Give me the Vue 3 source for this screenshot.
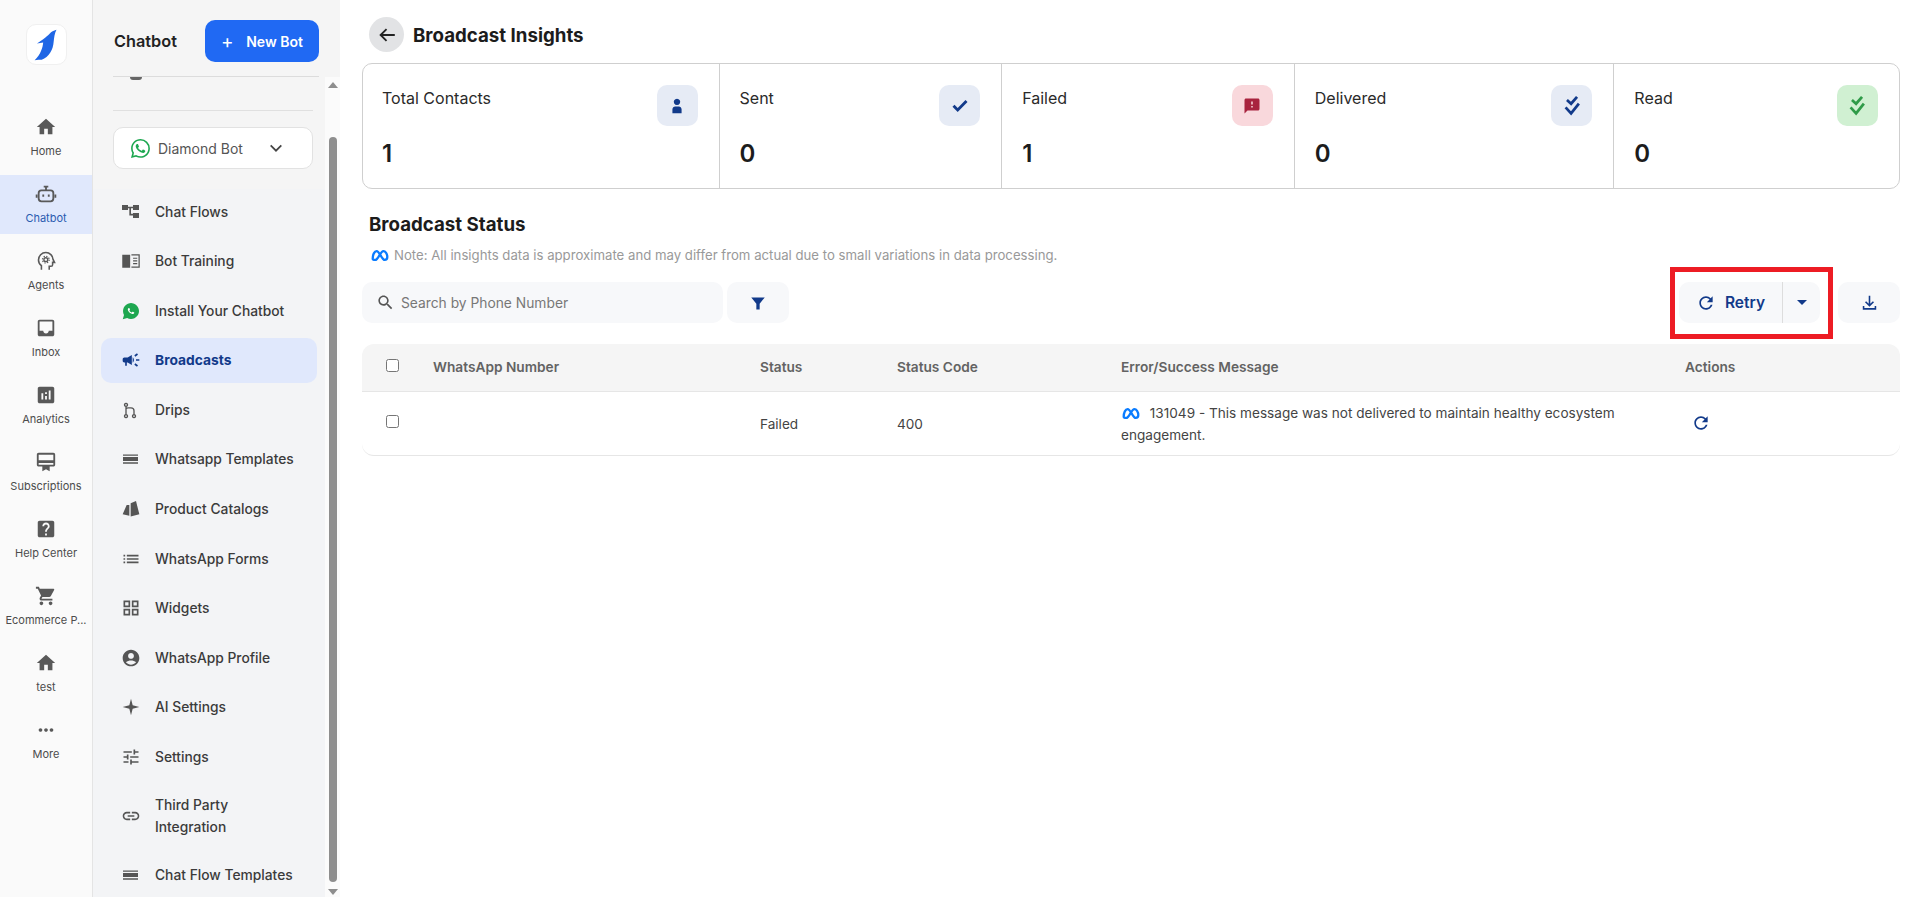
<template>
  <div class="page">
    <!-- left rail -->
    <nav class="rail">
      <div class="logo">
        <svg viewBox="0 0 41 41" width="39" height="39"><path d="M31 5C28 6 25.500 7 24 9C22 11 20 13 17 15L10.500 19.500L17 18.500C16.500 24 14.500 31 8 37L12 36.500L15.500 36.500C23 34 27.500 26 28 18C28.500 13 29 9 31 5z" fill="#1f66e5" /></svg>
      </div>
      <div v-for="item in railItems" :key="item.label" class="rail-item" :class="{ active: item.active }">
        <svg viewBox="0 0 24 24" width="22" height="22">
          <path v-if="item.d" :d="item.d" />
          <g v-else-if="item.label === 'Chatbot'" class="line-icon">
            <rect x="4" y="8" width="16" height="12" rx="3" />
            <path d="M12 8V4.500M9.500 4h5M1.800 12.500v3.500M22.200 12.500v3.500" />
            <path d="M9 12.500v2.500M15 12.500v2.500" />
          </g>
          <g v-else class="line-icon head-icon">
            <path d="M7 21.500v-4.500c-1.900-1.500-3.200-3.700-3.200-6.200C3.800 6.300 7.400 2.800 11.800 2.800c4.300 0 7.800 3.300 7.900 7.500l1.600 3.200h-2.100v2.500c0 1-.8 1.800-1.800 1.800h-1.900v3.700" />
            <circle cx="11.800" cy="10.500" r="2.100" class="gear-ring" />
            <circle cx="11.800" cy="10.500" r="3.700" class="gear-teeth" />
          </g>
        </svg>
        <span>{{ item.label }}</span>
      </div>
    </nav>

    <!-- chatbot sidebar -->
    <aside class="sidebar">
      <div class="side-head">
        <span class="side-title">Chatbot</span>
        <button class="new-bot"><span class="plus">+</span> New Bot</button>
      </div>
      <div class="side-body">
        <div class="side-scroll">
          <div class="side-top">
            <div class="clipped-avatar"></div>
            <div class="bot-select">
              <svg viewBox="0 0 16 16" width="19" height="19" class="wa-outline"><path :d="icons.waOutline" /></svg>
              <span>Diamond Bot</span>
              <svg viewBox="0 0 24 24" width="16" height="16" class="chev"><path d="M4 8l8 8 8-8" /></svg>
            </div>
          </div>
          <div class="menu">
            <div v-for="m in menuItems" :key="m.label" class="menu-item" :class="{ active: m.active }">
              <svg viewBox="0 0 24 24" width="20" height="20" class="menu-icon" :class="m.cls">
                <path v-if="m.d" :d="m.d" />
                <g v-if="m.label === 'Install Your Chatbot'" transform="translate(1.600 1.600) scale(.87)">
                  <path d="M.6 23.400l1.700-6.100A11 11 0 1 1 6.700 21.700z" />
                  <path transform="translate(3.200 3.200) scale(1.100)" fill="#fff" :d="icons.waPhone" />
                </g>
              </svg>
              <span class="menu-label">{{ m.label }}</span>
            </div>
          </div>
        </div>
        <div class="scrollbar">
          <i class="arrow up"></i>
          <div class="thumb"></div>
          <i class="arrow down"></i>
        </div>
      </div>
    </aside>

    <!-- main -->
    <main class="main">
      <div class="title-row">
        <button class="back">
          <svg viewBox="0 0 24 24" width="22" height="22"><path d="M20.500 12H5M11.500 5.500L5 12l6.500 6.500" /></svg>
        </button>
        <h1>Broadcast Insights</h1>
      </div>

      <section class="stats">
        <div v-for="s in stats" :key="s.label" class="stat">
          <div class="stat-text">
            <div class="stat-label">{{ s.label }}</div>
            <div class="stat-value">{{ s.value }}</div>
          </div>
          <div class="stat-icon" :class="s.tone">
            <svg viewBox="0 0 24 24" :width="s.size || 22" :height="s.size || 22">
              <path v-if="s.d" :d="s.d" />
              <g v-else class="double-check">
                <path d="M6.500 5.500l4.500 4 6.500-7.500" />
                <path d="M5 13.500l6 6.500 8.500-10.500" />
              </g>
            </svg>
          </div>
        </div>
      </section>

      <h2>Broadcast Status</h2>
      <p class="note">
        <svg viewBox="0 0 24 16" width="20" height="13" class="meta"><path d="M3 12c0-5 2.200-9.500 4.800-9.500 3.800 0 6.400 11 10 11 2 0 3.200-1.400 3.200-3.600 0-4-2.400-7.400-4.800-7.400-3.800 0-6.400 11-10 11C4.200 13.500 3 13 3 12z" /></svg>
        Note: All insights data is approximate and may differ from actual due to small variations in data processing.
      </p>

      <div class="toolbar">
        <div class="search">
          <svg viewBox="0 0 24 24" width="19" height="19"><path :d="icons.search" /></svg>
          <span>Search by Phone Number</span>
        </div>
        <button class="tool-btn">
          <svg viewBox="0 0 24 24" width="18" height="18"><path d="M3 4.500h18l-6.800 8.500v7.500h-4.400V13z" /></svg>
        </button>
        <div class="spacer"></div>
        <div class="retry">
          <button class="retry-main">
            <svg viewBox="0 0 24 24" width="20" height="20"><path :d="icons.refresh" /></svg>
            Retry
          </button>
          <button class="retry-drop"><i class="caret"></i></button>
          <div class="highlight"></div>
        </div>
        <button class="tool-btn download">
          <svg viewBox="0 0 24 24" width="19" height="19" class="stroke-icon"><path d="M12 3.500v12M7 11l5 5 5-5M4.500 16.500v3.500h15v-3.500" /></svg>
        </button>
      </div>

      <section class="table">
        <div class="tr head">
          <div><input type="checkbox" /></div>
          <div>WhatsApp Number</div>
          <div>Status</div>
          <div>Status Code</div>
          <div>Error/Success Message</div>
          <div>Actions</div>
        </div>
        <div class="tr row">
          <div><input type="checkbox" /></div>
          <div></div>
          <div>Failed</div>
          <div>400</div>
          <div class="msg">
            <svg viewBox="0 0 24 16" width="20" height="13" class="meta"><path d="M3 12c0-5 2.200-9.500 4.800-9.500 3.800 0 6.400 11 10 11 2 0 3.200-1.400 3.200-3.600 0-4-2.400-7.400-4.800-7.400-3.800 0-6.400 11-10 11C4.200 13.500 3 13 3 12z" /></svg>
            131049 - This message was not delivered to maintain healthy ecosystem engagement.
          </div>
          <div class="act">
            <svg viewBox="0 0 24 24" width="20" height="20"><path :d="icons.refresh" /></svg>
          </div>
        </div>
      </section>
    </main>
  </div>
</template>

<script setup>
const icons = {
  home: 'M10 20v-6h4v6h5v-8h3L12 3 2 12h3v8z',
  refresh: 'M17.650 6.350C16.200 4.900 14.210 4 12 4c-4.420 0-7.990 3.580-7.990 8s3.570 8 7.990 8c3.730 0 6.840-2.550 7.730-6h-2.080c-.820 2.330-3.040 4-5.650 4-3.310 0-6-2.690-6-6s2.690-6 6-6c1.660 0 3.140.690 4.220 1.780L13 11h7V4l-2.350 2.350z',
  search: 'M15.500 14h-.790l-.280-.270C15.410 12.590 16 11.110 16 9.500 16 5.910 13.090 3 9.500 3S3 5.910 3 9.500 5.910 16 9.500 16c1.610 0 3.090-.590 4.230-1.570l.270.280v.790l5 4.990L20.490 19l-4.990-5zm-6 0C7.010 14 5 11.990 5 9.500S7.010 5 9.500 5 14 7.010 14 9.500 11.990 14 9.500 14z',
  waOutline: 'M13.601 2.326A7.854 7.854 0 0 0 7.994 0C3.627 0 .068 3.558.064 7.926c0 1.399.366 2.760 1.057 3.965L0 16l4.204-1.102a7.933 7.933 0 0 0 3.790.965h.004c4.368 0 7.926-3.558 7.930-7.930A7.898 7.898 0 0 0 13.600 2.326zM7.994 14.521a6.573 6.573 0 0 1-3.356-.920l-.240-.144-2.494.654.666-2.433-.156-.251a6.560 6.560 0 0 1-1.007-3.505c0-3.626 2.957-6.584 6.591-6.584a6.560 6.560 0 0 1 4.660 1.931 6.557 6.557 0 0 1 1.928 4.660c-.004 3.639-2.961 6.592-6.592 6.592zm3.615-4.934c-.197-.099-1.170-.578-1.353-.646-.182-.065-.315-.099-.445.099-.133.197-.513.646-.627.775-.114.133-.232.148-.430.050-.197-.100-.836-.308-1.592-.985-.590-.525-.985-1.175-1.103-1.372-.114-.198-.011-.304.088-.403.087-.088.197-.232.296-.346.100-.114.133-.198.198-.330.065-.134.034-.248-.015-.347-.050-.099-.445-1.076-.612-1.470-.160-.389-.323-.335-.445-.340-.114-.007-.247-.007-.380-.007a.729.729 0 0 0-.529.247c-.182.198-.691.677-.691 1.654 0 .977.710 1.916.810 2.049.098.133 1.394 2.132 3.383 2.992.470.205.840.326 1.129.418.475.152.904.129 1.246.080.380-.058 1.171-.480 1.338-.943.164-.464.164-.860.114-.943-.049-.084-.182-.133-.380-.232z',
  waPhone: 'M11.609 9.587c-.197-.099-1.170-.578-1.353-.646-.182-.065-.315-.099-.445.099-.133.197-.513.646-.627.775-.114.133-.232.148-.430.050-.197-.100-.836-.308-1.592-.985-.590-.525-.985-1.175-1.103-1.372-.114-.198-.011-.304.088-.403.087-.088.197-.232.296-.346.100-.114.133-.198.198-.330.065-.134.034-.248-.015-.347-.050-.099-.445-1.076-.612-1.470-.160-.389-.323-.335-.445-.340-.114-.007-.247-.007-.380-.007a.729.729 0 0 0-.529.247c-.182.198-.691.677-.691 1.654 0 .977.710 1.916.810 2.049.098.133 1.394 2.132 3.383 2.992.470.205.840.326 1.129.418.475.152.904.129 1.246.080.380-.058 1.171-.480 1.338-.943.164-.464.164-.860.114-.943-.049-.084-.182-.133-.380-.232z',
  bars: 'M2.400 6.600h18V8h-18zM2.400 9.500h18v5h-18zM2.400 16h18v1.600h-18z'
}

const railItems = [
  { label: 'Home', d: icons.home },
  { label: 'Chatbot', active: true },
  { label: 'Agents' },
  { label: 'Inbox', d: 'M19 3H4.990c-1.110 0-1.980.890-1.980 2L3 19c0 1.100.880 2 1.990 2H19c1.100 0 2-.900 2-2V5c0-1.110-.900-2-2-2zm0 12h-4c0 1.660-1.350 3-3 3s-3-1.340-3-3H4.990V5H19v10z' },
  { label: 'Analytics', d: 'M19 3H5c-1.100 0-2 .900-2 2v14c0 1.100.900 2 2 2h14c1.100 0 2-.900 2-2V5c0-1.100-.900-2-2-2zM9 17H7v-7h2v7zm4 0h-2v-4h2v4zm0-6h-2V9h2v2zm4 6h-2V7h2v10z' },
  { label: 'Subscriptions', d: 'M20 2H4c-1.110 0-2 .890-2 2v11c0 1.110.890 2 2 2h4v5l4-2 4 2v-5h4c1.110 0 2-.890 2-2V4c0-1.110-.890-2-2-2zm0 13H4v-2h16v2zm0-5H4V4h16v6z' },
  { label: 'Help Center', d: 'M19 3H5c-1.110 0-2 .900-2 2v14c0 1.100.890 2 2 2h14c1.100 0 2-.900 2-2V5c0-1.100-.900-2-2-2zm-6 16h-2v-2h2v2zm2.070-7.750l-.900.920C13.450 12.900 13 13.500 13 15h-2v-.500c0-1.100.450-2.100 1.170-2.830l1.240-1.260c.370-.360.590-.860.590-1.410 0-1.100-.900-2-2-2s-2 .900-2 2H8c0-2.210 1.790-4 4-4s4 1.790 4 4c0 .880-.360 1.680-.930 2.250z' },
  { label: 'Ecommerce P...', d: 'M7 18c-1.100 0-1.990.900-1.990 2S5.900 22 7 22s2-.900 2-2-.900-2-2-2zM1 2v2h2l3.600 7.590-1.350 2.450c-.160.280-.250.610-.250.960 0 1.100.900 2 2 2h12v-2H7.420c-.140 0-.250-.110-.250-.250l.030-.120.900-1.630h7.450c.750 0 1.410-.410 1.750-1.030l3.580-6.490c.080-.140.120-.310.120-.480 0-.550-.450-1-1-1H5.210l-.940-2H1zm16 16c-1.100 0-1.990.900-1.990 2s.890 2 1.990 2 2-.900 2-2-.900-2-2-2z' },
  { label: 'test', d: icons.home },
  { label: 'More', d: 'M6 10c-1.100 0-2 .900-2 2s.900 2 2 2 2-.900 2-2-.900-2-2-2zm12 0c-1.100 0-2 .900-2 2s.900 2 2 2 2-.900 2-2-.900-2-2-2zm-6 0c-1.100 0-2 .900-2 2s.900 2 2 2 2-.900 2-2-.900-2-2-2z' }
]

const menuItems = [
  { label: 'Chat Flows', d: 'M1.200 3.600h7.200v2h6v-2h7.200v6h-7.200v-2H12v6.600h2.400v-1h7.200v6h-7.200v-3H10V7.600H8.400v2H1.200z' },
  { label: 'Bot Training', d: 'M1.500 4.500H11v15.500H1.500zM12.500 4H22.500v16H12.500v-1.500h8.500V5.500h-8.500zM14.500 8h5v1.300h-5zM14.500 11.200h5v1.300h-5zM14.500 14.500h5v1.300h-5z' },
  { label: 'Install Your Chatbot', cls: 'green' },
  { label: 'Broadcasts', active: true, d: 'M18 11v2h4v-2h-4zm-2 6.610c.960.710 2.210 1.650 3.200 2.390.400-.530.800-1.070 1.200-1.600-.990-.740-2.240-1.680-3.200-2.400-.400.540-.800 1.080-1.200 1.610zM20.400 5.600c-.400-.530-.800-1.070-1.200-1.600-.990.740-2.240 1.680-3.200 2.400.400.530.800 1.070 1.200 1.600.960-.720 2.210-1.650 3.200-2.400zM4 9c-1.100 0-2 .900-2 2v2c0 1.100.900 2 2 2h1v4h2v-4h1l5 3V6L8 9H4zm11.500 3c0-1.330-.580-2.530-1.500-3.350v6.690c.920-.810 1.500-2.010 1.500-3.340z' },
  { label: 'Drips', cls: 'route', d: 'M6 7.500v10M6 11c0-1 1-1.500 2.500-1.500h3.500c2 0 3.600 1.500 3.600 3.500v4.300M6 4a1.800 1.800 0 1 0 .01 0zM6 17.500a1.800 1.800 0 1 0 .01 0zM15.600 17.500a1.800 1.800 0 1 0 .01 0z' },
  { label: 'Whatsapp Templates', d: icons.bars },
  { label: 'Product Catalogs', d: 'M11.600 5.200L18 2.400 22 18.400 11.600 21zM2 18.400L6.800 7.200H10V20z' },
  { label: 'WhatsApp Forms', d: 'M3 13h2v-2H3v2zm0 4h2v-2H3v2zm0-8h2V7H3v2zm4 4h14v-2H7v2zm0 4h14v-2H7v2zM7 7v2h14V7H7z' },
  { label: 'Widgets', d: 'M3 3v8h8V3H3zm6 6H5V5h4v4zm-6 4v8h8v-8H3zm6 6H5v-4h4v4zm4-16v8h8V3h-8zm6 6h-4V5h4v4zm-6 4v8h8v-8h-8zm6 6h-4v-4h4v4z' },
  { label: 'WhatsApp Profile', d: 'M12 2C6.480 2 2 6.480 2 12s4.480 10 10 10 10-4.480 10-10S17.520 2 12 2zm0 4c1.930 0 3.500 1.570 3.500 3.500S13.930 13 12 13s-3.500-1.570-3.500-3.500S10.070 6 12 6zm0 14c-2.030 0-4.430-.820-6.140-2.880C7.550 15.800 9.680 15 12 15s4.450.800 6.140 2.120C16.430 19.180 14.030 20 12 20z' },
  { label: 'AI Settings', d: 'M12 2l2 8 8 2-8 2-2 8-2-8-8-2 8-2z' },
  { label: 'Settings', d: 'M3 17v2h6v-2H3zM3 5v2h10V5H3zm10 16v-2h8v-2h-8v-2h-2v6h2zM7 9v2H3v2h4v2h2V9H7zm14 4v-2H11v2h10zm-6-4h2V7h4V5h-4V3h-2v6z' },
  { label: 'Third Party Integration', d: 'M3.900 12c0-1.710 1.390-3.100 3.100-3.100h4V7H7c-2.760 0-5 2.240-5 5s2.240 5 5 5h4v-1.900H7c-1.710 0-3.100-1.390-3.100-3.100zM8 13h8v-2H8v2zm9-6h-4v1.900h4c1.710 0 3.100 1.390 3.100 3.100s-1.390 3.100-3.100 3.100h-4V17h4c2.760 0 5-2.240 5-5s-2.240-5-5-5z' },
  { label: 'Chat Flow Templates', d: icons.bars }
]

const stats = [
  { label: 'Total Contacts', value: 1, tone: 'blue', d: 'M12 4a3.500 3.500 0 1 1-.01 0zM7 15.500c0-1.500 1.500-3 3-3h4c1.500 0 3 1.500 3 3V20H7z' },
  { label: 'Sent', value: 0, tone: 'blue', d: 'M9.500 18.500L3.800 12.800l2.200-2.200 3.500 3.500L18 5.500l2.200 2.200z' },
  { label: 'Failed', value: 1, tone: 'red', size: 18, d: 'M20 2H4c-1.100 0-1.990.900-1.990 2L2 22l4-4h14c1.100 0 2-.900 2-2V4c0-1.100-.900-2-2-2zm-7 12h-2v-2h2v2zm0-4h-2V6h2v4z' },
  { label: 'Delivered', value: 0, tone: 'blue' },
  { label: 'Read', value: 0, tone: 'green' }
]
</script>

<style>
html, body {
  margin: 0;
  background: #fff;
}
</style>

<style scoped>
.page {
  display: flex;
  height: 897px;
  overflow: hidden;
  font-family: Inter, "Noto Sans", sans-serif;
  color: #1c1c1c;
}

/* rail */
.rail {
  width: 92px;
  flex: none;
  background: #fafafa;
  border-right: 1px solid #e4e4e4;
}
.logo {
  width: 41px;
  height: 41px;
  margin: 24px 0 43px 26px;
  background: #fff;
  border: 1px solid #f0f0f0;
  border-radius: 10px;
  box-sizing: border-box;
}
.rail-item {
  height: 59px;
  margin-bottom: 8px;
  display: flex;
  flex-direction: column;
  align-items: center;
  padding-top: 8px;
  box-sizing: border-box;
  font-size: 11px;
  color: #4c4c4c;
  gap: 6px;
}
.rail-item svg {
  fill: #595959;
  flex: none;
}
.rail-item span {
  line-height: 15px;
  white-space: nowrap;
}
.rail-item.active {
  background: #e0e8fc;
  color: #2a5bb0;
}
.line-icon {
  fill: none;
  stroke: #595959;
  stroke-width: 2;
}
.head-icon {
  stroke-width: 1.7;
}
.gear-ring {
  stroke-width: 1.5;
}
.gear-teeth {
  stroke-width: 1.3;
  stroke-dasharray: 1.4 1.5;
}

/* sidebar */
.sidebar {
  width: 247px;
  flex: none;
  background: #f5f5f5;
  display: flex;
  flex-direction: column;
}
.side-head {
  height: 77px;
  flex: none;
  box-sizing: border-box;
  margin: 0 21px 0 20px;
  padding-top: 20px;
  border-bottom: 1px solid #dcdcdc;
  display: flex;
  justify-content: space-between;
  align-items: flex-start;
}
.side-title {
  font-size: 16.3px;
  font-weight: 600;
  line-height: 42px;
  color: #222;
  margin-left: 1px;
}
.new-bot {
  width: 114px;
  height: 42px;
  border: none;
  border-radius: 10px;
  background: #2069f3;
  color: #fff;
  font: 600 14px Inter, sans-serif;
}
.plus {
  font-size: 19px;
  font-weight: 400;
  margin-right: 9px;
  vertical-align: -1px;
}
.side-body {
  flex: 1;
  min-height: 0;
  display: flex;
}
.side-scroll {
  width: 232px;
  flex: none;
  overflow: hidden;
}
.side-top {
  height: 112px;
  box-sizing: border-box;
  margin: 0 12px 0 20px;
  padding-top: 50px;
  position: relative;
}
.side-top::before {
  content: "";
  position: absolute;
  left: 0;
  right: 0;
  top: 33px;
  border-top: 1px solid #e0e0e0;
}
.clipped-avatar {
  position: absolute;
  left: 17px;
  top: 0;
  width: 12px;
  height: 3px;
  background: #666;
  border-radius: 0 0 6px 6px;
}
.bot-select {
  height: 42px;
  box-sizing: border-box;
  background: #fff;
  border: 1px solid #e2e2e2;
  border-radius: 10px;
  display: flex;
  align-items: center;
  padding: 0 28px 0 17px;
  font-size: 14px;
  color: #555;
}
.bot-select span {
  margin-left: 8px;
  flex: 1;
}
.wa-outline {
  fill: #1da750;
}
.chev {
  fill: none;
  stroke: #444;
  stroke-width: 2.6;
}
.menu {
  background: #f3f4f6;
  padding: 0 8px;
  display: flex;
  flex-direction: column;
  gap: 4.6px;
}
.menu-item {
  min-height: 45px;
  box-sizing: border-box;
  display: flex;
  align-items: center;
  padding: 10px 16px 10px 20px;
  font-size: 13.8px;
  font-weight: 500;
  line-height: 22px;
  color: #3b3b3b;
  border-radius: 10px;
}
.menu-label {
  max-width: 142px;
}
.menu-icon {
  flex: none;
  fill: #555;
  margin-right: 14px;
}
.menu-icon.green {
  fill: #1da750;
}
.menu-icon.route {
  fill: none;
  stroke: #555;
  stroke-width: 1.6;
}
.menu-item.active {
  background: #e0e8fc;
  color: #123a8a;
  font-weight: 700;
}
.menu-item.active .menu-icon {
  fill: #123a8a;
}
.scrollbar {
  width: 15px;
  flex: none;
  background: #fbfbfb;
  display: flex;
  flex-direction: column;
  align-items: center;
}
.thumb {
  width: 8px;
  height: 745px;
  margin: 49px 0 auto;
  border-radius: 4px;
  background: #8e8e8e;
}
.arrow {
  width: 0;
  height: 0;
  border-left: 5px solid transparent;
  border-right: 5px solid transparent;
}
.arrow.up {
  margin-top: 5px;
  border-bottom: 6px solid #8e8e8e;
}
.arrow.down {
  margin-bottom: 2px;
  border-top: 6px solid #8e8e8e;
}

/* main */
.main {
  flex: 1;
  min-width: 0;
  padding: 17px 17px 0 22px;
}
.title-row {
  display: flex;
  align-items: center;
  gap: 9px;
  margin-left: 7px;
}
.back {
  width: 35px;
  height: 35px;
  padding: 0;
  border: none;
  border-radius: 50%;
  background: #e2e3e5;
  display: flex;
  align-items: center;
  justify-content: center;
}
.back svg {
  fill: none;
  stroke: #222;
  stroke-width: 2;
}
h1 {
  margin: 2px 0 0;
  font-size: 18.7px;
  font-weight: 700;
  color: #1c1c1c;
}
.stats {
  display: grid;
  grid-template-columns: 356fr 283fr 293fr 320fr 286fr;
  height: 126px;
  margin-top: 11px;
  border: 1px solid #cfcfcf;
  border-radius: 10px;
  box-sizing: border-box;
}
.stat {
  display: flex;
  justify-content: space-between;
  padding: 21px 21px 0 20px;
  border-left: 1px solid #cfcfcf;
}
.stat:first-child {
  border-left: none;
  padding-left: 19px;
}
.stat-label {
  font-size: 16px;
  line-height: 22px;
  margin-top: 2px;
  color: #2a2a2a;
}
.stat-value {
  font-size: 24px;
  font-weight: 600;
  line-height: 30px;
  margin-top: 30px;
  color: #1c1c1c;
}
.stat-icon {
  width: 41px;
  height: 41px;
  border-radius: 10px;
  display: flex;
  align-items: center;
  justify-content: center;
}
.stat-icon.blue {
  background: #e6ebf5;
  fill: #123a8a;
  stroke: #123a8a;
}
.stat-icon.red {
  background: #f9d8dc;
  fill: #a8233e;
}
.stat-icon.green {
  background: #d0f0d2;
  fill: #2f9b48;
  stroke: #2f9b48;
}
.stat-icon svg > path {
  stroke: none;
}
.double-check {
  fill: none;
  stroke-width: 3;
}
h2 {
  margin: 24px 0 0 7px;
  font-size: 18.7px;
  font-weight: 700;
  line-height: 24px;
  color: #1c1c1c;
}
.note {
  margin: 9px 0 0 8px;
  display: flex;
  align-items: center;
  gap: 4px;
  font-size: 13.2px;
  line-height: 18px;
  color: #999;
}
.meta {
  fill: none;
  stroke: #0a7cff;
  stroke-width: 2.8;
  flex: none;
}
.toolbar {
  display: flex;
  height: 41px;
  margin-top: 18px;
  gap: 4px;
}
.search {
  width: 361px;
  box-sizing: border-box;
  background: #f7f8fa;
  border-radius: 10px;
  display: flex;
  align-items: center;
  gap: 6px;
  padding-left: 14px;
  font-size: 13.8px;
  color: #777;
}
.search svg {
  fill: #555;
  flex: none;
}
.tool-btn {
  width: 62px;
  padding: 0;
  border: none;
  background: #f7f8fa;
  border-radius: 10px;
  display: flex;
  align-items: center;
  justify-content: center;
}
.tool-btn svg {
  fill: #123a8a;
}
.tool-btn .stroke-icon {
  fill: none;
  stroke: #123a8a;
  stroke-width: 2;
}
.spacer {
  flex: 1;
}
.retry {
  position: relative;
  width: 141px;
  display: flex;
  background: #f7f8fa;
  border-radius: 10px;
}
.retry button {
  border: none;
  background: none;
  padding: 0;
}
.retry-main {
  width: 104px;
  border-right: 1px solid #ddd !important;
  display: flex;
  align-items: center;
  justify-content: center;
  gap: 9px;
  font: 600 15.5px Inter, sans-serif;
  color: #123a8a;
}
.retry-main svg {
  fill: #123a8a;
}
.retry-drop {
  flex: 1;
  display: flex;
  align-items: center;
  justify-content: center;
}
.caret {
  border-left: 5px solid transparent;
  border-right: 5px solid transparent;
  border-top: 5px solid #123a8a;
}
.highlight {
  position: absolute;
  inset: -15px -13px -16px -9px;
  border: 5px solid #ed1c24;
  pointer-events: none;
}
.download {
  margin-left: 14px;
}
.table {
  margin-top: 21px;
}
.tr {
  display: grid;
  grid-template-columns: 71px 327px 137px 224px 564px 1fr;
}
.head {
  height: 48px;
  background: #f5f5f5;
  border-radius: 12px 12px 0 0;
  border-bottom: 1px solid #e6e6e6;
  box-sizing: border-box;
  font-size: 13.7px;
  font-weight: 600;
  color: #636363;
  line-height: 46px;
}
.tr input {
  margin: 15px 0 0 24px;
  display: block;
}
.row {
  min-height: 64px;
  box-sizing: border-box;
  border-bottom: 1px solid #e6e6e6;
  font-size: 13.6px;
  color: #444;
  line-height: 22px;
  align-items: center;
  border-radius: 0 0 12px 12px;
}
.row input {
  margin-top: -4px;
}
.row > div:nth-child(3),
.row > div:nth-child(4) {
  padding-top: 1px;
}
.msg {
  padding-right: 50px;
}
.msg .meta {
  vertical-align: -2px;
  margin-right: 5px;
}
.act {
  padding-left: 6px;
  height: 20px;
  margin-top: -2px;
}
.act svg {
  fill: #123a8a;
}
</style>
